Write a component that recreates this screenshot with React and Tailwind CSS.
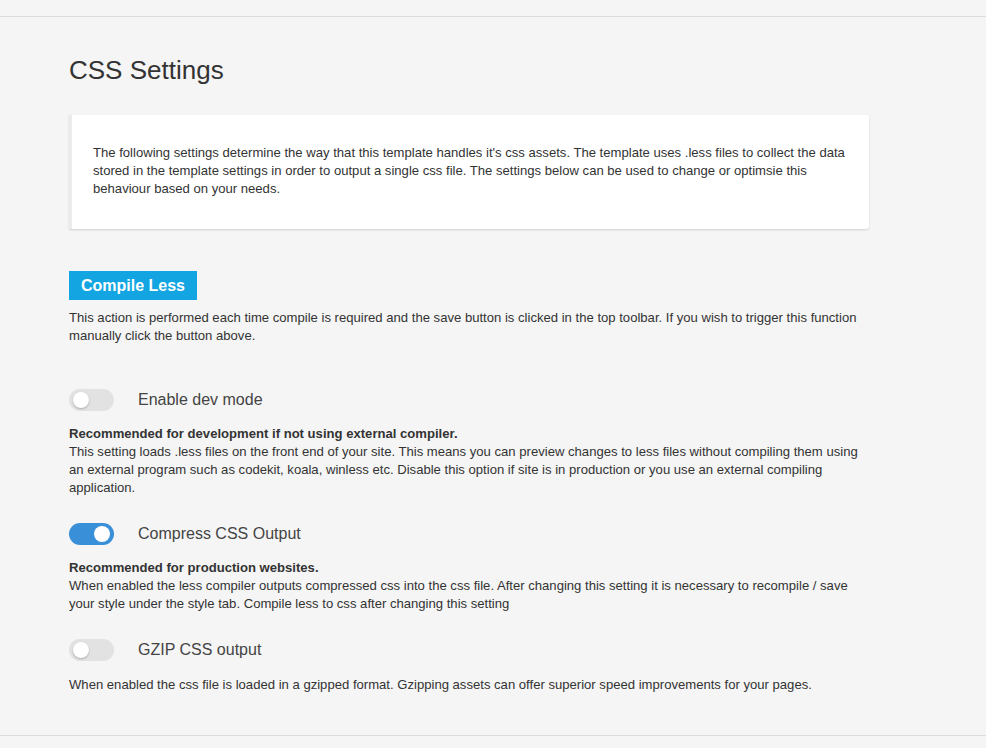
const font = { fontFamily: '"Liberation Sans", Arial, sans-serif' };

const Toggle = ({ on }) => (
  <div
    className={
      on
        ? "relative w-[45px] h-[22px] rounded-full bg-[#3a8fd9]"
        : "relative w-[45px] h-[22px] rounded-full bg-[#e2e2e2]"
    }
  >
    <div
      className={
        on
          ? "absolute top-[3px] right-[4px] w-[16px] h-[16px] rounded-full bg-white"
          : "absolute top-[3px] left-[4px] w-[16px] h-[16px] rounded-full bg-white shadow-[0_1px_2px_rgba(0,0,0,0.25)]"
      }
    />
  </div>
);

const Setting = ({ label, on, bold, children, gap }) => (
  <div>
    <div className="flex items-center h-[22px]">
      <Toggle on={on} />
      <span className="ml-[24px] text-[16px] text-[#444]">{label}</span>
    </div>
    <div className={gap}>
      {bold && <p className="font-bold text-[#333]">{bold}</p>}
      <p>{children}</p>
    </div>
  </div>
);

export default function App() {
  return (
    <div className="min-h-[748px] bg-[#f5f5f5] text-[13.1px] leading-[18px] text-[#333]" style={font}>
      <div className="h-[16px]" />
      <div className="border-t border-[#dcdcdc]">
        <div className="pl-[69px] w-[871px] pt-[38px] pb-[41px]">
          <h1 className="text-[26px] leading-[30px] text-[#333]">CSS Settings</h1>

          <div className="mt-[30px] w-[800px] bg-white border-l-[3px] border-[#ebebeb] rounded-r-[3px] shadow-[0_1px_2px_rgba(0,0,0,0.15)] pl-[21px] pr-[6px] pt-[29px] pb-[31px]">
            <p>
              The following settings determine the way that this template handles it's css assets. The template uses .less
              files to collect the data stored in the template settings in order to output a single css file. The settings
              below can be used to change or optimsie this behaviour based on your needs.
            </p>
          </div>

          <button className="mt-[42px] h-[29px] w-[128px] bg-[#12a5e2] text-white text-[16px] font-bold">
            Compile Less
          </button>
          <p className="mt-[9px]">
            This action is performed each time compile is required and the save button is clicked in the top toolbar. If
            you wish to trigger this function manually click the button above.
          </p>

          <div className="mt-[44px] flex flex-col gap-[26px]">
            <Setting
              label="Enable dev mode"
              bold="Recommended for development if not using external compiler."
              gap="mt-[14px]"
            >
              This setting loads .less files on the front end of your site. This means you can preview changes to less
              files without compiling them using an external program such as codekit, koala, winless etc. Disable this
              option if site is in production or you use an external compiling application.
            </Setting>
            <Setting on label="Compress CSS Output" bold="Recommended for production websites." gap="mt-[14px]">
              When enabled the less compiler outputs compressed css into the css file. After changing this setting it is
              necessary to recompile / save your style under the style tab. Compile less to css after changing this
              setting
            </Setting>
            <Setting label="GZIP CSS output" gap="mt-[15px]">
              When enabled the css file is loaded in a gzipped format. Gzipping assets can offer superior speed
              improvements for your pages.
            </Setting>
          </div>
        </div>
        <div className="border-t border-[#dcdcdc] h-[12px]" />
      </div>
    </div>
  );
}
